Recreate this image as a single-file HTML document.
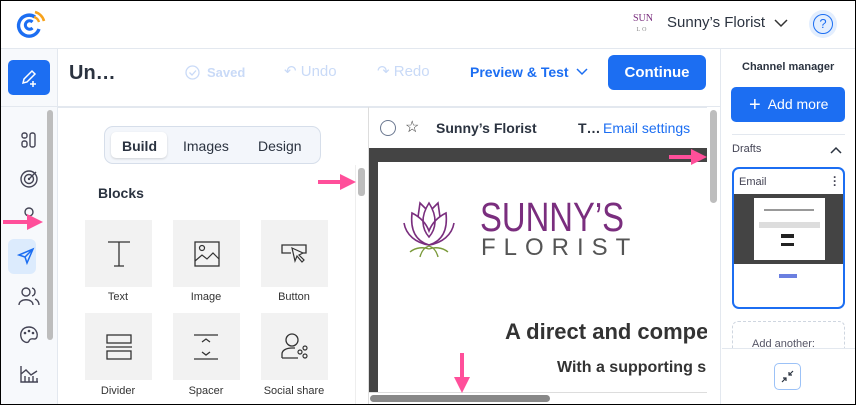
<!DOCTYPE html>
<html><head><style>
*{box-sizing:border-box;margin:0;padding:0}
body{width:856px;height:405px;overflow:hidden;font-family:"Liberation Sans",sans-serif;background:#fff;position:relative;color:#2b3340}
.a{position:absolute}
.frame{position:absolute;left:0;top:0;width:856px;height:405px;border:1.5px solid #000;pointer-events:none;z-index:50}
.tile{position:absolute;width:67px;height:67px;background:#f2f2f2}
.lbl{position:absolute;font-size:11px;color:#333;text-align:center;width:90px}
.pk{position:absolute;background:#ff4f9a;z-index:20}
</style></head><body>
<svg class="a" style="left:14px;top:9px" width="32" height="32" viewBox="0 0 32 32"><path d="M21 8 A10.5 10.5 0 1 0 25 20" fill="none" stroke="#1c6ef2" stroke-width="3.4"/><path d="M18.5 13 A4.2 4.2 0 1 0 18.5 19" fill="none" stroke="#1c6ef2" stroke-width="3"/><path d="M21 3 A13 13 0 0 1 30 12" fill="none" stroke="#f7a21b" stroke-width="2.6"/><path d="M20 8 A7.5 7.5 0 0 1 25 13" fill="none" stroke="#f7a21b" stroke-width="2.4"/></svg>
<div class="a" style="left:633px;top:14px;font-size:10px;color:#7a2e7e;line-height:10px;font-family:'Liberation Serif',serif">SUN<br><span style="font-size:6px;color:#888;letter-spacing:2px">&nbsp;LO</span></div>
<div class="a" style="left:667px;top:14px;font-size:15px;color:#2b3340">Sunny’s Florist</div>
<svg class="a" style="left:774px;top:18px" width="14" height="10"><path d="M1 2 L7 8 L13 2" fill="none" stroke="#333" stroke-width="1.5"/></svg>
<div class="a" style="left:809px;top:10px;width:28px;height:28px;border-radius:50%;background:#e3eefe"></div>
<div class="a" style="left:813px;top:14px;width:20px;height:20px;border-radius:50%;border:1.6px solid #1c6ef2;color:#1c6ef2;font-size:13px;text-align:center;line-height:17px">?</div>
<div class="a" style="left:0;top:48px;width:856px;height:1px;background:#e3e8ef"></div>
<div class="a" style="left:57px;top:49px;width:1px;height:356px;background:#e3e8ef"></div>
<div class="a" style="left:0;top:49px;width:57px;height:356px;background:#f7f9fc"></div>
<div class="a" style="left:8px;top:60px;width:42px;height:35px;background:#1c6ef2;border-radius:5px"></div>
<svg class="a" style="left:20px;top:68px" width="20" height="20" viewBox="0 0 20 20"><path d="M3 15 L4 11 L12 3 L15 6 L7 14 Z" fill="none" stroke="#fff" stroke-width="1.5"/><path d="M13 13 v6 M10 16 h6" stroke="#fff" stroke-width="1.5"/></svg>
<div class="a" style="left:0;top:106px;width:57px;height:1px;background:#e3e8ef"></div>
<div class="a" style="left:47px;top:110px;width:6px;height:230px;background:#bdbdbd;border-radius:3px"></div>
<svg class="a" style="left:20px;top:131px" width="18" height="18"><rect x="2" y="2" width="5" height="5" rx="2" fill="none" stroke="#445" stroke-width="1.4"/><rect x="2" y="10" width="5" height="6" rx="2" fill="none" stroke="#445" stroke-width="1.4"/><rect x="10" y="2" width="5" height="14" rx="2" fill="none" stroke="#445" stroke-width="1.4"/></svg>
<svg class="a" style="left:19px;top:169px" width="20" height="20"><circle cx="10" cy="10" r="8" fill="none" stroke="#445" stroke-width="1.4"/><circle cx="10" cy="10" r="4.5" fill="none" stroke="#445" stroke-width="1.4"/><circle cx="10" cy="10" r="1.2" fill="#445"/><path d="M10 10 L17 3" stroke="#445" stroke-width="1.4"/></svg>
<svg class="a" style="left:22px;top:207px" width="14" height="14"><circle cx="7" cy="5" r="4" fill="none" stroke="#445" stroke-width="1.4"/></svg>
<div class="a" style="left:8px;top:239px;width:28px;height:35px;background:#dcebfd;border-radius:6px"></div>
<svg class="a" style="left:17px;top:247px" width="18" height="18"><path d="M2 8 L16 2 L10 16 L8 10 Z M8 10 L16 2" fill="none" stroke="#1c6ef2" stroke-width="1.5"/></svg>
<svg class="a" style="left:18px;top:286px" width="22" height="20"><circle cx="8" cy="6" r="4" fill="none" stroke="#445" stroke-width="1.4"/><path d="M1 19 C1 12 15 12 15 19" fill="none" stroke="#445" stroke-width="1.4"/><path d="M14 2 C18 3 18 9 14 10 M17 13 C20 14 21 17 21 19" fill="none" stroke="#445" stroke-width="1.4"/></svg>
<svg class="a" style="left:19px;top:325px" width="20" height="20"><path d="M10 2 C3 2 1 8 2 12 C3 17 9 19 10 16 C11 13 14 14 16 14 C20 13 19 2 10 2Z" fill="none" stroke="#445" stroke-width="1.4"/><circle cx="6" cy="8" r="1.3" fill="#445"/><circle cx="10" cy="6" r="1.3" fill="#445"/><circle cx="14" cy="8" r="1.3" fill="#445"/></svg>
<svg class="a" style="left:19px;top:364px" width="20" height="20"><path d="M2 2 V18 H19 M2 10 L7 6 L12 11 L18 7 M6 18 V12 M10 18 V13 M14 18 V12 M18 18 V14" fill="none" stroke="#445" stroke-width="1.4"/></svg>
<div class="a" style="left:69px;top:62px;font-size:20px;font-weight:bold;color:#2b3340">Un…</div>
<svg class="a" style="left:185px;top:65px" width="15" height="15"><circle cx="7.5" cy="7.5" r="6.5" fill="none" stroke="#c9daf7" stroke-width="1.3"/><path d="M4.5 7.5 L7 10 L11 5.5" fill="none" stroke="#c9daf7" stroke-width="1.3"/></svg>
<div class="a" style="left:207px;top:65px;font-size:13px;color:#c9daf7;font-weight:bold">Saved</div>
<div class="a" style="left:284px;top:62px;font-size:15px;color:#c9daf7">↶ Undo</div>
<div class="a" style="left:377px;top:62px;font-size:15px;color:#c9daf7">↷ Redo</div>
<div class="a" style="left:470px;top:64px;font-size:14px;color:#1c6ef2;font-weight:bold">Preview &amp; Test</div>
<svg class="a" style="left:576px;top:68px" width="12" height="8"><path d="M1 1 L6 6 L11 1" fill="none" stroke="#1c6ef2" stroke-width="1.5"/></svg>
<div class="a" style="left:608px;top:55px;width:98px;height:35px;background:#1c6ef2;border-radius:6px;color:#fff;font-size:15px;font-weight:bold;text-align:center;line-height:35px">Continue</div>
<div class="a" style="left:58px;top:106px;width:662px;height:1.5px;background:#e3e8ef"></div>
<div class="a" style="left:104px;top:126px;width:217px;height:38px;border:1px solid #d6deea;border-radius:9px;background:#f3f6fb"></div>
<div class="a" style="left:111px;top:132px;width:56px;height:26px;background:#fff;border-radius:5px;box-shadow:0 1px 2px rgba(0,0,0,.15)"></div>
<div class="a" style="left:122px;top:138px;font-size:14px;font-weight:bold;color:#2b3340">Build</div>
<div class="a" style="left:183px;top:138px;font-size:14px;color:#2b3340">Images</div>
<div class="a" style="left:258px;top:138px;font-size:14px;color:#2b3340">Design</div>
<div class="a" style="left:98px;top:185px;font-size:14px;font-weight:bold;color:#2b3340">Blocks</div>
<div class="a" style="left:355px;top:165px;width:1px;height:240px;background:#eee"></div>
<div class="a" style="left:358px;top:168px;width:7px;height:28px;background:#bdbdbd;border-radius:3px"></div>
<div class="tile" style="left:85px;top:220px"></div><div class="tile" style="left:173px;top:220px"></div><div class="tile" style="left:261px;top:220px"></div>
<div class="tile" style="left:85px;top:313px"></div><div class="tile" style="left:173px;top:313px"></div><div class="tile" style="left:261px;top:313px"></div>
<svg class="a" style="left:107px;top:241px" width="24" height="26"><path d="M1 1 H23 M12 1 V25 M7 25 H17" stroke="#333" stroke-width="1.3" fill="none"/></svg>
<svg class="a" style="left:194px;top:241px" width="26" height="26"><rect x="1" y="1" width="24" height="24" fill="none" stroke="#333" stroke-width="1.3"/><circle cx="8" cy="7" r="2.5" fill="none" stroke="#333" stroke-width="1.2"/><path d="M1 20 L8 14 L13 18 L19 12 L25 18" fill="none" stroke="#333" stroke-width="1.2"/></svg>
<svg class="a" style="left:281px;top:243px" width="28" height="24"><path d="M10 10 H1 V2 H25 V10 H22" fill="none" stroke="#333" stroke-width="1.3"/><path d="M11 5 L14 18 L16 13 L21 19 L23 17 L18 12 L22 10 Z" fill="none" stroke="#333" stroke-width="1.2"/></svg>
<svg class="a" style="left:106px;top:334px" width="26" height="26"><rect x="1" y="1" width="24" height="8" fill="none" stroke="#333" stroke-width="1.3"/><path d="M0 13 H26" stroke="#333" stroke-width="1.3"/><rect x="1" y="17" width="24" height="8" fill="none" stroke="#333" stroke-width="1.3"/></svg>
<svg class="a" style="left:194px;top:334px" width="24" height="26"><path d="M0 1 H24 M0 25 H24 M8 8 L12 5 L16 8 M8 18 L12 21 L16 18" fill="none" stroke="#333" stroke-width="1.3"/></svg>
<svg class="a" style="left:281px;top:333px" width="28" height="26"><circle cx="11" cy="7" r="6" fill="none" stroke="#333" stroke-width="1.3"/><path d="M1 25 V21 C1 17 6 15 11 15 H14 M1 25 H17" fill="none" stroke="#333" stroke-width="1.3"/><circle cx="24" cy="15" r="2" fill="none" stroke="#333" stroke-width="1.2"/><circle cx="19" cy="19" r="2" fill="none" stroke="#333" stroke-width="1.2"/><circle cx="24" cy="23" r="2" fill="none" stroke="#333" stroke-width="1.2"/></svg>
<div class="lbl" style="left:73px;top:291px">Text</div><div class="lbl" style="left:161px;top:291px">Image</div><div class="lbl" style="left:249px;top:291px">Button</div>
<div class="lbl" style="left:73px;top:385px">Divider</div><div class="lbl" style="left:161px;top:385px">Spacer</div><div class="lbl" style="left:249px;top:385px">Social share</div>
<div class="a" style="left:368px;top:107px;width:1px;height:298px;background:#ddd"></div>
<div class="a" style="left:380px;top:120px;width:16px;height:16px;border-radius:50%;border:1.5px solid #6b7890"></div>
<div class="a" style="left:405px;top:117px;font-size:16px;color:#333">☆</div>
<div class="a" style="left:436px;top:120px;font-size:14px;font-weight:bold;color:#2b3340">Sunny’s Florist</div>
<div class="a" style="left:578px;top:120px;font-size:14px;font-weight:bold;color:#2b3340">T…</div>
<div class="a" style="left:603px;top:120px;font-size:14px;color:#1c6ef2">Email settings</div>
<div class="a" style="left:369px;top:148px;width:338px;height:248px;background:#444"></div>
<div class="a" style="left:378px;top:162px;width:329px;height:230px;background:#fff"></div>
<div class="a" style="left:369px;top:392px;width:338px;height:13px;background:#fff;border-top:1px solid #ddd"></div>
<div class="a" style="left:370px;top:395px;width:180px;height:7px;background:#888;border-radius:4px"></div>
<div class="a" style="left:707px;top:107px;width:13px;height:298px;background:#fff"></div>
<div class="a" style="left:710px;top:110px;width:7px;height:93px;background:#bdbdbd;border-radius:4px"></div>
<svg class="a" style="left:396px;top:197px" width="66" height="64" viewBox="0 0 66 64"><g fill="none" stroke="#7a2e7e" stroke-width="1.6"><path d="M33 48 C20 44 14 34 16 16 C24 20 30 26 33 34 C36 26 42 20 50 16 C52 34 46 44 33 48Z"/><path d="M33 40 C26 32 24 20 33 6 C42 20 40 32 33 40Z"/><path d="M22 20 L24 6 L30 12 M44 20 L42 6 L36 12"/><path d="M8 26 C10 38 20 46 33 48 C46 46 56 38 58 26"/></g><path d="M24 60 C26 52 30 50 33 49 C36 50 40 52 42 60 M14 55 C20 50 28 50 33 52 M52 55 C46 50 38 50 33 52" fill="none" stroke="#7a9a3a" stroke-width="1.4"/></svg>
<div class="a" style="left:480px;top:194px;font-size:41px;color:#7a2e7e;white-space:nowrap;transform:scaleX(.8);transform-origin:left">SUNNY’S</div>
<div class="a" style="left:481px;top:234px;font-size:24px;color:#555;letter-spacing:8px">FLORIST</div>
<div class="a" style="left:505px;top:319px;font-size:22px;font-weight:bold;color:#333;white-space:nowrap;width:202px;overflow:hidden">A direct and compelling</div>
<div class="a" style="left:557px;top:359px;font-size:16px;font-weight:bold;color:#333;white-space:nowrap;width:150px;overflow:hidden">With a supporting s</div>
<div class="a" style="left:720px;top:49px;width:1px;height:356px;background:#e3e8ef"></div>
<div class="a" style="left:742px;top:61px;font-size:11px;font-weight:bold;color:#2b3340">Channel manager</div>
<div class="a" style="left:731px;top:87px;width:114px;height:35px;background:#1c6ef2;border-radius:5px;color:#fff;font-size:14px;line-height:35px;padding-left:18px"><span style="font-size:20px;vertical-align:-2px">+</span>&nbsp; Add more</div>
<div class="a" style="left:732px;top:134px;width:113px;height:1px;background:#e3e8ef"></div>
<div class="a" style="left:732px;top:143px;font-size:11px;color:#445">Drafts</div>
<svg class="a" style="left:830px;top:146px" width="12" height="8"><path d="M1 7 L6 2 L11 7" fill="none" stroke="#2b3340" stroke-width="1.5"/></svg>
<div class="a" style="left:732px;top:167px;width:113px;height:142px;border:2px solid #1c6ef2;border-radius:7px;overflow:hidden">
<div class="a" style="left:5px;top:7px;font-size:11px;color:#445">Email</div>
<div class="a" style="left:99px;top:6px;font-size:12px;font-weight:bold;color:#445;line-height:4px">·<br>·<br>·</div>
<div class="a" style="left:0;top:25px;width:111px;height:70px;background:#444"></div>
<div class="a" style="left:20px;top:29px;width:71px;height:62px;background:#fff"></div>
<div class="a" style="left:30px;top:40px;width:50px;height:2px;background:#999"></div>
<div class="a" style="left:25px;top:53px;width:61px;height:6px;background:#ddd"></div>
<div class="a" style="left:47px;top:65px;width:13px;height:4px;background:#222"></div>
<div class="a" style="left:47px;top:74px;width:13px;height:3px;background:#222"></div>
<div class="a" style="left:45px;top:105px;width:18px;height:4px;background:#6b7fe0"></div>
</div>
<div class="a" style="left:732px;top:321px;width:113px;height:40px;border:1px dashed #cfd6e0;border-bottom:none;border-radius:6px 6px 0 0"></div>
<div class="a" style="left:752px;top:338px;font-size:11px;color:#556">Add another:</div>
<div class="a" style="left:722px;top:348px;width:134px;height:57px;background:#fff;border-top:1px solid #e3e8ef"></div>
<div class="a" style="left:774px;top:363px;width:27px;height:27px;border:1px solid #9cc2f7;border-radius:5px"></div>
<svg class="a" style="left:781px;top:370px" width="13" height="13"><path d="M12 1 L8 5 M8 2 V5 H11 M1 12 L5 8 M2 8 H5 V11" fill="none" stroke="#2b3340" stroke-width="1.2"/></svg>
<div class="pk" style="left:318px;top:180px;width:26px;height:4px"></div>
<svg class="a" style="left:340px;top:174px;z-index:20" width="16" height="16"><path d="M0 0 L16 8 L0 16Z" fill="#ff4f9a"/></svg>
<div class="pk" style="left:3px;top:220px;width:28px;height:4px"></div>
<svg class="a" style="left:27px;top:214px;z-index:20" width="16" height="16"><path d="M0 0 L16 8 L0 16Z" fill="#ff4f9a"/></svg>
<div class="pk" style="left:669px;top:155px;width:25px;height:4px"></div>
<svg class="a" style="left:691px;top:149px;z-index:20" width="16" height="16"><path d="M0 0 L16 8 L0 16Z" fill="#ff4f9a"/></svg>
<div class="pk" style="left:460px;top:353px;width:4px;height:27px"></div>
<svg class="a" style="left:454px;top:377px;z-index:20" width="16" height="16"><path d="M0 0 L16 0 L8 16Z" fill="#ff4f9a"/></svg>
<div class="frame"></div>
</body></html>
